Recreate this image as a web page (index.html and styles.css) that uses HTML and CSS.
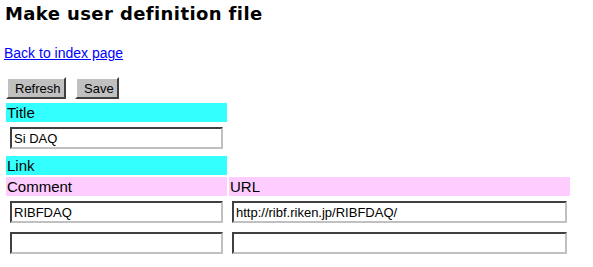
FILE: index.html
```html
<!DOCTYPE html>
<html lang="en">

<head>
    <meta charset="UTF-8">
    <title>Make user definition file</title>
    <link rel="stylesheet" href="styles.css">
</head>

<body>
    <h1>Make user definition file</h1>
    <p class="back"><a href="#">Back to index page</a></p>

    <form class="def">
        <div class="buttons">
            <button type="button">Refresh</button>
            <button type="button">Save</button>
        </div>
        <table class="deftable">
            <tr>
                <td class="head col1">Title</td>
                <td></td>
            </tr>
            <tr class="inrow first">
                <td class="col1"><input type="text" class="short" value="Si DAQ"></td>
                <td></td>
            </tr>
            <tr>
                <td class="head col1">Link</td>
                <td></td>
            </tr>
            <tr>
                <td class="sub col1">Comment</td>
                <td class="sub col2">URL</td>
            </tr>
            <tr class="inrow">
                <td class="col1"><input type="text" class="short" value="RIBFDAQ"></td>
                <td class="col2"><input type="text" class="long" value="http://ribf.riken.jp/RIBFDAQ/"></td>
            </tr>
            <tr class="inrow">
                <td class="col1"><input type="text" class="short" value=""></td>
                <td class="col2"><input type="text" class="long" value=""></td>
            </tr>
        </table>
    </form>
</body>

</html>
```

FILE: styles.css
```css
* {
    box-sizing: border-box;
}

body {
    margin: 0;
    padding: 0 4px;
    font-family: "Liberation Sans", Arial, sans-serif;
    font-size: 15px;
    color: #000;
    background: #fff;
}

h1 {
    margin: 0;
    padding: 3px 0 0 1px;
    font-family: "DejaVu Sans", sans-serif;
    font-size: 18px;
    line-height: 22px;
    font-weight: bold;
    letter-spacing: 0.4px;
}

.back {
    margin: 20px 0 0;
    font-size: 14px;
    line-height: 16px;
}

.back a {
    color: #00f;
}

.buttons {
    display: flex;
    gap: 9px;
    margin: 16px 0 0 2px;
}

.buttons button {
    height: 22px;
    padding: 0 7px;
    font-family: "Liberation Sans", Arial, sans-serif;
    font-size: 13px;
    color: #000;
    background: #c0c0c0;
    border: 2px solid;
    border-color: #fff #404040 #404040 #fff;
}

.buttons button:first-child {
    width: 60px;
}

.buttons button:last-child {
    width: 44px;
}

.deftable {
    border-spacing: 2px;
    margin-top: 2px;
}

.deftable td {
    padding: 0;
    height: 18px;
    line-height: 18px;
    vertical-align: middle;
}

.deftable .col1 {
    width: 221px;
}

.deftable .col2 {
    width: 341px;
}

.deftable .head {
    background: #33ffff;
    padding: 1px 0 0 1px;
}

.deftable .sub {
    background: #ffccff;
    padding: 1px 0 0 1px;
}

.deftable .inrow td {
    height: 29px;
    padding: 3px 0 0 4px;
    vertical-align: top;
}

.deftable .inrow.first td {
    height: 30px;
}

.deftable .inrow td.col2 {
    padding-left: 3px;
}

.deftable input {
    display: block;
    height: 22px;
    padding: 0 2px;
    font-family: "Liberation Sans", Arial, sans-serif;
    font-size: 13px;
    color: #000;
    background: #fff;
    border: 2px solid;
    border-color: #404040 #c0c0c0 #c0c0c0 #404040;
    outline: none;
}

.deftable input.short {
    width: 213px;
}

.deftable input.long {
    width: 335px;
}
```
